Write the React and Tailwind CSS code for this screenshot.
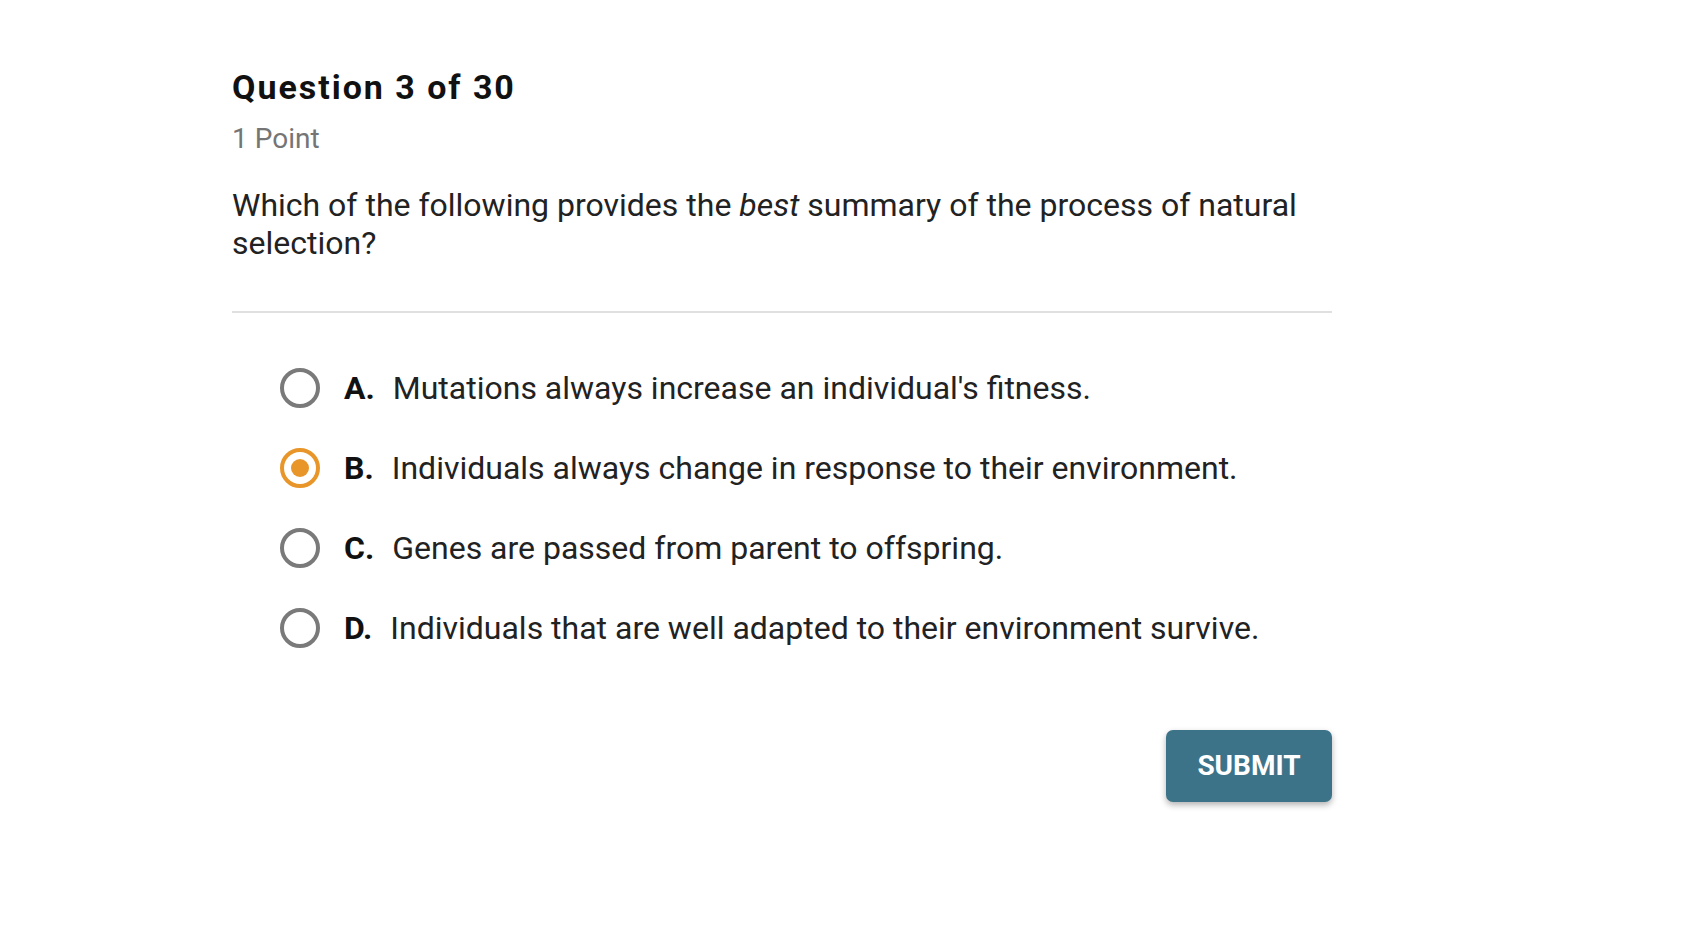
export default function App() {
  const options = [
    { letter: "A.", text: "Mutations always increase an individual's fitness." },
    { letter: "B.", text: "Individuals always change in response to their environment.", selected: true },
    { letter: "C.", text: "Genes are passed from parent to offspring." },
    { letter: "D.", text: "Individuals that are well adapted to their environment survive." },
  ];

  return (
    <div className="min-h-screen bg-white font-['Roboto',sans-serif]">
      <div className="ml-[232px] w-[1100px] pt-[67px]">
        <h1 className="text-[34px] leading-[40px] font-bold tracking-[0.058em] text-[#111]">
          Question 3 of 30
        </h1>
        <p className="mt-[16px] text-[28px] leading-[32px] text-[#757575]">1 Point</p>
        <p className="mt-[31px] text-[32px] leading-[38px] text-[#222]">
          Which of the following provides the <i>best</i> summary of the process of natural selection?
        </p>

        <div className="mt-[49px] h-[2px] bg-[#e0e0e0]" />

        <div className="mt-[35px] pl-[48px]">
          {options.map((o) => (
            <div key={o.letter} className="flex h-[80px] items-center">
              {o.selected ? (
                <span className="flex h-[40px] w-[40px] shrink-0 items-center justify-center rounded-full border-[4px] border-[#e8962a]">
                  <span className="h-[18px] w-[18px] rounded-full bg-[#e8962a]" />
                </span>
              ) : (
                <span className="h-[40px] w-[40px] shrink-0 rounded-full border-[4px] border-[#7a7a7a]" />
              )}
              <span className="ml-[24px] mr-[18px] text-[32px] leading-[38px] font-bold text-[#111]">{o.letter}</span>
              <span className="text-[32px] leading-[38px] text-[#222]">{o.text}</span>
            </div>
          ))}
        </div>

        <div className="mt-[62px] flex justify-end">
          <button className="h-[72px] w-[166px] rounded-[7px] bg-[#3d7388] text-[28px] font-bold text-white shadow-[0_3px_6px_rgba(0,0,0,0.3)]">
            SUBMIT
          </button>
        </div>
      </div>
    </div>
  );
}
